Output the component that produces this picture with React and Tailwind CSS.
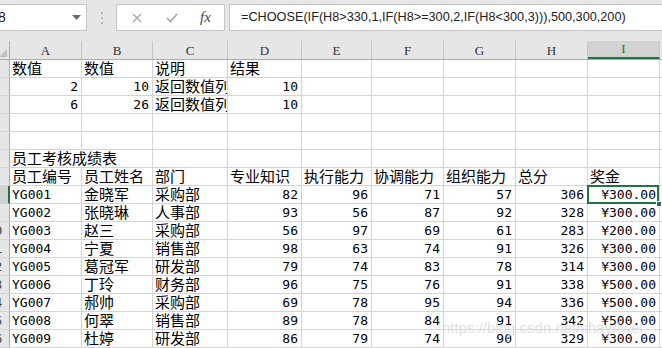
import React from 'react';

const cjk = '"Noto Sans CJK SC", sans-serif';
const mono = '"DejaVu Sans Mono", "Noto Sans CJK SC", monospace';

const colLetters = ['A', 'B', 'C', 'D', 'E', 'F', 'G', 'H', 'I', 'J'];

const staff = [
    ['YG001', '金晓军', '采购部', 82, 96, 71, 57, 306, '¥300.00'],
    ['YG002', '张晓琳', '人事部', 93, 56, 87, 92, 328, '¥300.00'],
    ['YG003', '赵三', '采购部', 56, 97, 69, 61, 283, '¥200.00'],
    ['YG004', '宁夏', '销售部', 98, 63, 74, 91, 326, '¥300.00'],
    ['YG005', '葛冠军', '研发部', 79, 74, 83, 78, 314, '¥300.00'],
    ['YG006', '丁玲', '财务部', 96, 75, 76, 91, 338, '¥500.00'],
    ['YG007', '郝帅', '采购部', 69, 78, 95, 94, 336, '¥500.00'],
    ['YG008', '何翠', '销售部', 89, 78, 84, 91, 342, '¥500.00'],
    ['YG009', '杜婷', '研发部', 86, 79, 74, 90, 329, '¥300.00'],
];

const rows = [
    ['数值', '数值', '说明', '结果'],
    [2, 10, '返回数值列表', 10],
    [6, 26, '返回数值列表', 10],
    [],
    [],
    ['员工考核成绩表'],
    ['员工编号', '员工姓名', '部门', '专业知识', '执行能力', '协调能力', '组织能力', '总分', '奖金'],
    ...staff,
];

// row header + A..J
const gridCols = 'grid grid-cols-[30px_72px_71px_75px_74px_70px_72px_72px_72px_72px_72px]';

const Cell = ({ value, rowIdx, colIdx }) => {
    const isNum = typeof value === 'number' || (typeof value === 'string' && value.startsWith('¥'));
    const isLatin = isNum || (typeof value === 'string' && /^[A-Za-z0-9]+$/.test(value));
    const isTitle = rowIdx === 5 && colIdx === 0;
    const isSelected = rowIdx === 7 && colIdx === 8;

    return (
        <div
            className={`relative h-[18px] border-b border-[#d4d4d4] flex items-end whitespace-nowrap text-black ${
                isTitle ? 'overflow-visible z-10' : 'overflow-hidden border-r'
            } ${isNum ? 'justify-end pr-[3px]' : 'pl-[2px]'} ${isSelected ? 'overflow-visible z-20' : ''}`}
            style={{ fontFamily: isLatin ? mono : cjk }}
        >
            <span className={isLatin ? 'text-[13px] leading-[16px]' : 'text-[15px] leading-[18px]'}>
                {value ?? ''}
            </span>
            {isSelected && (
                <>
                    <div className="absolute left-[-1px] top-[-1px] right-0 bottom-[-1px] border-2 border-[#217346]" />
                    <div className="absolute right-[-3px] bottom-[-4px] w-[6px] h-[6px] bg-[#217346] border border-white" />
                </>
            )}
        </div>
    );
};

export default function App() {
    return (
        <div className="relative w-[662px] h-[348px] overflow-hidden bg-white">
            {/* formula bar */}
            <div className="h-[41px] bg-[#e6e6e6] flex items-start pt-[4px]">
                <div
                    className="ml-[-10px] w-[97px] h-[27px] bg-white border border-[#c6c6c6] flex items-center pl-[3px] pr-[5px]"
                    style={{ fontFamily: '"Liberation Sans", sans-serif' }}
                >
                    <span className="text-[14px] text-[#222]">I8</span>
                    <svg className="ml-auto" width="9" height="5" viewBox="0 0 9 5">
                        <path d="M0 0 L9 0 L4.5 5 Z" fill="#6b6b6b" />
                    </svg>
                </div>
                <div className="ml-[14px] mt-[8px] flex flex-col gap-[3px]">
                    <div className="w-[2px] h-[2px] bg-[#b9b9b9]" />
                    <div className="w-[2px] h-[2px] bg-[#b9b9b9]" />
                    <div className="w-[2px] h-[2px] bg-[#b9b9b9]" />
                </div>
                <div className="ml-[13px] w-[109px] h-[27px] bg-white border border-[#c6c6c6] flex items-center pl-[15px]">
                    <svg width="10" height="10" viewBox="0 0 10 10">
                        <path d="M1 1 L9 9 M9 1 L1 9" stroke="#a6a6a6" strokeWidth="1.3" />
                    </svg>
                    <svg className="ml-[24px]" width="12" height="10" viewBox="0 0 12 10">
                        <path d="M1 5 L4.5 8.5 L11 1" stroke="#a6a6a6" strokeWidth="1.6" fill="none" />
                    </svg>
                    <span
                        className="ml-[22px] text-[15px] italic text-[#444]"
                        style={{ fontFamily: '"Liberation Serif", serif' }}
                    >
                        fx
                    </span>
                </div>
                <div
                    className="ml-[4px] flex-1 h-[27px] bg-white border border-r-0 border-[#c6c6c6] flex items-center pl-[11px] text-[12.7px] text-[#222]"
                    style={{ fontFamily: '"Liberation Sans", sans-serif' }}
                >
                    =CHOOSE(IF(H8&gt;330,1,IF(H8&gt;=300,2,IF(H8&lt;300,3))),500,300,200)
                </div>
            </div>

            {/* sheet */}
            <div className="ml-[-20px]">
                <div className={`${gridCols} bg-[#e6e6e6] border-b border-[#ababab]`}>
                    <div className="h-[18px] border-r border-[#ababab] flex items-end justify-end pr-[2px] pb-[2px]">
                        <svg width="8" height="8" viewBox="0 0 8 8">
                            <path d="M8 0 L8 8 L0 8 Z" fill="#c2c2c2" />
                        </svg>
                    </div>
                    {colLetters.map((c) => (
                        <div
                            key={c}
                            className={`h-[18px] border-r border-[#c6c6c6] flex items-end justify-center text-[13px] leading-[17px] ${
                                c === 'I' ? 'bg-[#d2d2d2] text-[#217346] border-b-2 border-b-[#217346]' : 'text-[#333]'
                            }`}
                            style={{ fontFamily: '"Liberation Serif", serif' }}
                        >
                            {c}
                        </div>
                    ))}
                </div>

                {rows.map((r, i) => (
                    <div key={i} className={gridCols}>
                        <div
                            className={`h-[18px] border-b border-[#d4d4d4] flex items-end justify-center text-[13px] leading-[16px] ${
                                i === 7
                                    ? 'bg-[#d2d2d2] text-[#217346] border-r-2 border-r-[#217346]'
                                    : 'bg-[#e6e6e6] text-[#444] border-r border-r-[#ababab]'
                            }`}
                            style={{ fontFamily: mono }}
                        >
                            {i + 1}
                        </div>
                        {colLetters.map((c, j) => (
                            <Cell key={c} value={r[j]} rowIdx={i} colIdx={j} />
                        ))}
                    </div>
                ))}
            </div>

            <div
                className="absolute left-[442px] top-[317px] text-[15px] text-[#d9d9d9] opacity-80 z-30 pointer-events-none"
                style={{ fontFamily: '"Liberation Sans", sans-serif' }}
            >
                https://blog.csdn.net/shayriwei
            </div>
        </div>
    );
}
